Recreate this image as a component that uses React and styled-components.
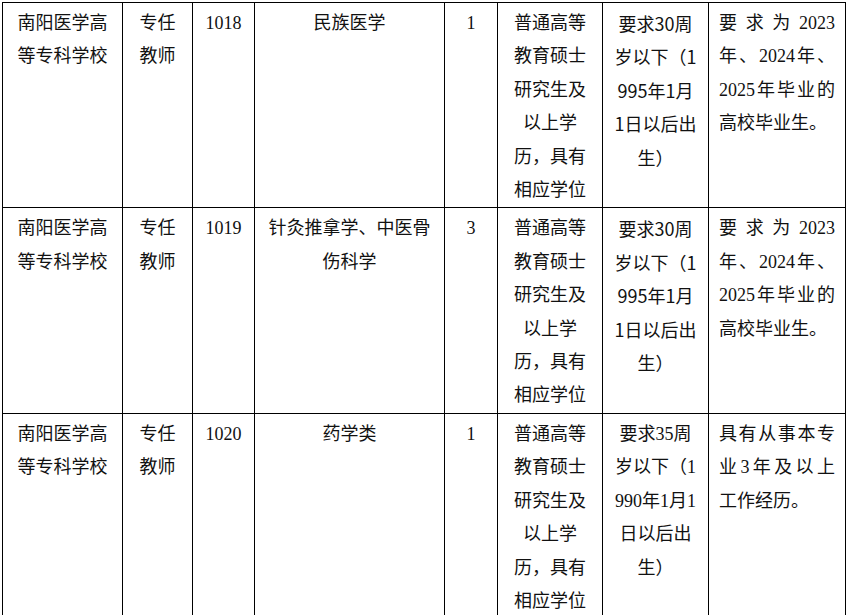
import React from "react";
import styled, { createGlobalStyle } from "styled-components";

const Global = createGlobalStyle`
  html, body { margin: 0; padding: 0; background: #fff; }
  body { overflow: hidden; }
`;

const Page = styled.div`
  width: 848px;
  height: 615px;
  overflow: hidden;
  padding: 2px 0 0 2px;
  box-sizing: border-box;
  background: #fff;
`;

const Table = styled.table`
  border-collapse: collapse;
  table-layout: fixed;
  width: 844px;
  color: #111;
  font-family: "Liberation Serif", "Noto Sans CJK SC", serif;
  font-size: 18px;
`;

const Row = styled.tr`
  height: 205px;
`;

const Cell = styled.td`
  border: 1px solid #000;
  vertical-align: top;
  padding: ${(p) => (p.$pad ? "4px 10px 0 10px" : "4px 0 0 0")};
  line-height: 33.4px;
  text-align: ${(p) => p.$align || "center"};
  font-family: ${(p) =>
    p.$sans
      ? '"Noto Sans CJK SC", sans-serif'
      : '"Liberation Serif", "Noto Sans CJK SC", serif'};
  white-space: nowrap;
  overflow: hidden;
`;

const Line = styled.div`
  display: block;
  white-space: nowrap;
  text-align: ${(p) => (p.$justify ? "justify" : "left")};
  text-align-last: ${(p) => (p.$justify ? "justify" : "left")};
  text-justify: inter-character;
`;

const widths = [120, 70, 62, 190, 53, 105, 106, 137];

const rows = [
  {
    school: ["南阳医学高", "等专科学校"],
    post: ["专任", "教师"],
    code: "1018",
    major: ["民族医学"],
    num: "1",
    edu: ["普通高等", "教育硕士", "研究生及", "以上学", "历，具有", "相应学位"],
    age: ["要求30周", "岁以下（1", "995年1月", "1日以后出", "生）"],
    ageSans: true,
    other: ["要求为2023", "年、2024年、", "2025年毕业的", "高校毕业生。"],
  },
  {
    school: ["南阳医学高", "等专科学校"],
    post: ["专任", "教师"],
    code: "1019",
    major: ["针灸推拿学、中医骨", "伤科学"],
    num: "3",
    edu: ["普通高等", "教育硕士", "研究生及", "以上学", "历，具有", "相应学位"],
    age: ["要求30周", "岁以下（1", "995年1月", "1日以后出", "生）"],
    ageSans: true,
    other: ["要求为2023", "年、2024年、", "2025年毕业的", "高校毕业生。"],
  },
  {
    school: ["南阳医学高", "等专科学校"],
    post: ["专任", "教师"],
    code: "1020",
    major: ["药学类"],
    num: "1",
    edu: ["普通高等", "教育硕士", "研究生及", "以上学", "历，具有", "相应学位"],
    age: ["要求35周", "岁以下（1", "990年1月1", "日以后出", "生）"],
    ageSans: false,
    other: ["具有从事本专", "业3年及以上", "工作经历。"],
  },
];

const Lines = ({ items }) =>
  items.map((t, i) => (
    <React.Fragment key={i}>
      {t}
      {i < items.length - 1 && <br />}
    </React.Fragment>
  ));

export default function App() {
  return (
    <>
      <Global />
      <Page>
        <Table>
          <colgroup>
            {widths.map((w, i) => (
              <col key={i} style={{ width: w }} />
            ))}
          </colgroup>
          <tbody>
            {rows.map((r) => (
              <Row key={r.code}>
                <Cell>
                  <Lines items={r.school} />
                </Cell>
                <Cell>
                  <Lines items={r.post} />
                </Cell>
                <Cell>{r.code}</Cell>
                <Cell>
                  <Lines items={r.major} />
                </Cell>
                <Cell>{r.num}</Cell>
                <Cell>
                  <Lines items={r.edu} />
                </Cell>
                <Cell $sans={r.ageSans}>
                  <Lines items={r.age} />
                </Cell>
                <Cell $align="left" $pad>
                  {r.other.map((t, i) => (
                    <Line key={i} $justify={i < r.other.length - 1}>
                      {t}
                    </Line>
                  ))}
                </Cell>
              </Row>
            ))}
          </tbody>
        </Table>
      </Page>
    </>
  );
}
